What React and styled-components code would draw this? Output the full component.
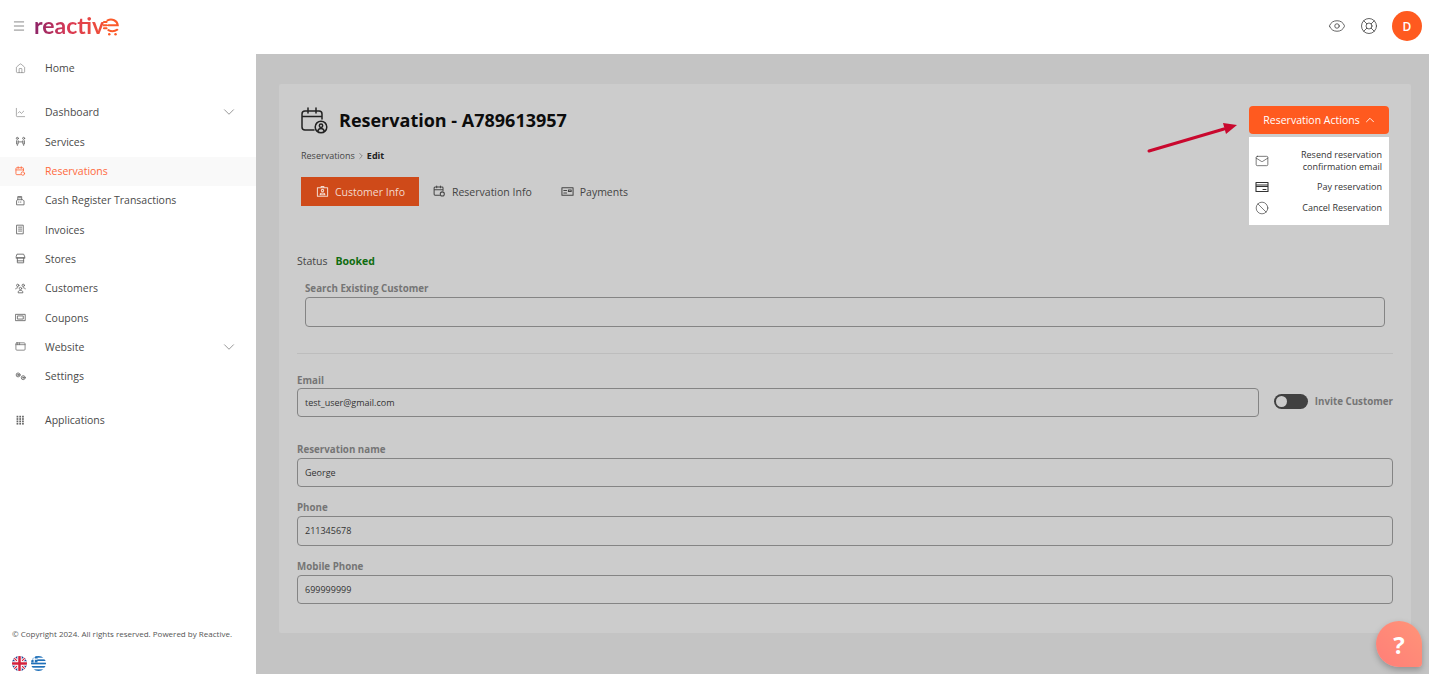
import React from 'react'
import styled, { createGlobalStyle } from 'styled-components'
import { Menu, Eye, LifeBuoy, House, ChartLine, ChevronDown, ChevronUp, ChevronRight, Mail, Ban, AppWindow } from 'lucide-react'

const GlobalStyle = createGlobalStyle`
  html, body { margin: 0; padding: 0; height: 100%; overflow: hidden; }
  body { font-family: "Open Sans", "Liberation Sans", sans-serif; background: #fff; color: #333; }
  * { box-sizing: border-box; }
`

const Page = styled.div`
  width: 1429px;
  height: 674px;
  display: grid;
  grid-template-columns: 256px 1fr;
  grid-template-rows: 54px 1fr;
  position: relative;
  overflow: hidden;
`

const TopBar = styled.header`
  grid-column: 1 / 3;
  display: flex;
  align-items: center;
  justify-content: space-between;
  padding: 0 7px 2px 12px;
  background: #fff;
`

const Brand = styled.div`
  display: flex;
  align-items: center;
  gap: 8px;
  color: #666;
`

const Logo = styled.span`
  display: inline-flex;
  align-items: center;
  font-family: "Lato", sans-serif;
  font-size: 23px;
  font-weight: 700;
  line-height: 24px;
  position: relative;
  top: -1px;
  background: linear-gradient(90deg, #8c2468 0%, #d93a55 40%, #fb5a2a 100%);
  -webkit-background-clip: text;
  background-clip: text;
  color: transparent;
`

const TopActions = styled.div`
  display: flex;
  align-items: center;
  gap: 14px;
  color: #444;
`

const Avatar = styled.div`
  width: 30px;
  height: 30px;
  border-radius: 50%;
  background: #ff5a1f;
  color: #fff;
  font-size: 12px;
  font-weight: 600;
  display: flex;
  align-items: center;
  justify-content: center;
`

const Sidebar = styled.aside`
  display: flex;
  flex-direction: column;
  background: #fff;
`

const NavGroup = styled.nav`
  display: flex;
  flex-direction: column;
  margin-top: ${p => p.$gap || 0}px;
`

const NavRow = styled.div`
  height: 29.3px;
  display: grid;
  grid-template-columns: 30px 1fr 34px;
  align-items: center;
  padding: 0 0 1px 15px;
  font-size: 10.500px;
  color: ${p => (p.$active ? '#ff6a3d' : '#4a4a4a')};
  background: ${p => (p.$active ? '#f9f9f9' : 'transparent')};
  svg { display: block; }
  > svg:first-child {
    width: 11px;
    height: 11px;
    color: ${p => (p.$active ? '#ff6a3d' : '#666')};
  }
`

const NavChevron = styled(ChevronDown)`
  margin-left: -2px;
  color: #666;
`

const FooterBlock = styled.div`
  margin-top: auto;
  padding: 0 0 3px 12px;
`

const Copyright = styled.div`
  font-size: 8px;
  line-height: 11px;
  color: #555;
`

const Flags = styled.div`
  display: flex;
  gap: 4px;
  margin-top: 17px;
`

const Main = styled.main`
  background: #c4c4c4;
  padding: 30px 18px 0 23px;
`

const Card = styled.section`
  height: 549px;
  background: #cccccc;
  padding: 22px 18px 0;
  border-radius: 2px;
`

const HeadRow = styled.div`
  display: flex;
  justify-content: space-between;
  align-items: flex-start;
  padding: 0 4px;
`

const TitleRow = styled.div`
  display: flex;
  align-items: center;
  gap: 11px;
  color: #222;
`

const Title = styled.h1`
  margin: 0;
  font-size: 18px;
  line-height: 28px;
  font-weight: 700;
  color: #0c0c0c;
`

const Crumbs = styled.div`
  display: flex;
  align-items: center;
  gap: 1px;
  font-size: 9px;
  line-height: 12px;
  color: #444;
  margin-top: 16px;
  b { color: #222; }
`

const ActionsWrap = styled.div`
  position: relative;
`

const ActionButton = styled.button`
  width: 140px;
  height: 28px;
  border: 0;
  border-radius: 4px;
  background: #ff5a1f;
  color: #fff;
  font-family: inherit;
  font-size: 10.500px;
  padding: 0 0 0 2px;
  display: flex;
  align-items: center;
  justify-content: center;
  gap: 3px;
`

const ActionMenu = styled.div`
  position: absolute;
  top: 31px;
  left: 0;
  width: 140px;
  height: 88px;
  background: #fff;
  padding: 12px 7px 0 6px;
  display: flex;
  flex-direction: column;
  gap: 7px;
`

const ActionItem = styled.div`
  display: flex;
  align-items: center;
  justify-content: space-between;
  font-size: 9px;
  line-height: 12px;
  color: #333;
  text-align: right;
`

const Tabs = styled.div`
  display: flex;
  align-items: stretch;
  margin: 15px 0 0 4px;
`

const Tab = styled.div`
  height: 29px;
  display: flex;
  align-items: center;
  gap: 6px;
  padding: 0 14px 0 ${p => (p.$active ? 15 : 14)}px;
  margin-right: ${p => (p.$active ? 0 : 1)}px;
  font-size: 10.500px;
  background: ${p => (p.$active ? '#cf4a19' : 'transparent')};
  color: ${p => (p.$active ? '#f3d9cd' : '#444')};
`

const StatusRow = styled.div`
  display: flex;
  gap: 8px;
  font-size: 10.500px;
  line-height: 15px;
  margin-top: 48px;
  color: #444;
  b { color: #106c10; }
`

const Field = styled.div`
  display: flex;
  flex-direction: column;
  flex: 1;
  margin: ${p => p.$top || 0}px ${p => p.$side || 0}px 0;
`

const Label = styled.label`
  font-size: 9.750px;
  line-height: 13px;
  font-weight: 700;
  color: #757575;
  margin-bottom: ${p => p.$gap ?? 2}px;
`

const Input = styled.div`
  height: 29.500px;
  border: 1px solid #848484;
  border-radius: 4px;
  padding: 0 7px;
  display: flex;
  align-items: center;
  font-size: 9px;
  color: #333;
`

const Divider = styled.hr`
  border: 0;
  border-top: 1px solid #bdbdbd;
  margin: 26px 0 0;
`

const InlineRow = styled.div`
  display: flex;
  align-items: flex-end;
`

const Invite = styled.div`
  display: flex;
  align-items: center;
  gap: 7px;
  margin: 0 0 8px 15px;
  font-size: 9.750px;
  font-weight: 700;
  color: #757575;
`

const Toggle = styled.span`
  width: 34px;
  height: 15px;
  border-radius: 8px;
  background: #414141;
  display: block;
  position: relative;
  &::after {
    content: '';
    position: absolute;
    left: 2px;
    top: 2px;
    width: 11px;
    height: 11px;
    border-radius: 50%;
    background: #ccc;
  }
`

const HelpButton = styled.div`
  position: absolute;
  left: 1376px;
  top: 621px;
  width: 46px;
  height: 46px;
  border-radius: 50% 50% 4px 50%;
  background: linear-gradient(45deg, #ff7e78, #ff9478);
  box-shadow: 0 3px 6px rgba(0, 0, 0, 0.25);
  color: #fff;
  font-size: 24px;
  font-weight: 700;
  display: flex;
  align-items: center;
  justify-content: center;
`

const Arrow = styled.svg`
  position: absolute;
  left: 1146px;
  top: 120px;
`

const Glyph = ({ children, size = 13, sw = 1.100 }) => (
  <svg width={size} height={size} viewBox="0 0 14 14" fill="none" stroke="currentColor" strokeWidth={sw} strokeLinecap="round" strokeLinejoin="round">
    {children}
  </svg>
)

const ServicesIcon = () => <Glyph><circle cx="3" cy="3" r="1.300" /><circle cx="11" cy="3" r="1.300" /><path d="M2 6v4M4 6v4M10 6v4M12 6v4M4 7.500h6M3 10v2M11 10v2" /></Glyph>
const CalendarIcon = () => <Glyph><path d="M7 11H2.200a1 1 0 0 1-1-1V3.200a1 1 0 0 1 1-1h7.600a1 1 0 0 1 1 1V6M1.200 5h9.600M4 1v2M8 1v2" /><circle cx="10" cy="9.600" r="2.200" /></Glyph>
const RegisterIcon = () => <Glyph><path d="M3.500 6V2h5v4M2 12V7.500L3 6h7l1.500 1.500V12zM4.500 9h.5M7 9h.5M4.500 3.500h3" /></Glyph>
const InvoiceIcon = () => <Glyph><path d="M2.500 1.500h8v11h-8zM4.500 4h4M4.500 6.500h4M4.500 9h4" /></Glyph>
const StoreIcon = () => <Glyph><path d="M3 1.500h8l1.500 3.500v1h-11V5zM1.500 6.500h11M3 6.500v6h8v-6M3 10h8" /></Glyph>
const PeopleIcon = () => <Glyph><circle cx="3.500" cy="3" r="1.500" /><circle cx="10.500" cy="3" r="1.500" /><circle cx="7" cy="7" r="1.500" /><path d="M1 7.500c0-1 1-1.500 2.500-1.500M13 7.500c0-1-1-1.500-2.500-1.500M4 12c0-2 1-2.500 3-2.500s3 .5 3 2.500z" /></Glyph>
const CouponIcon = () => <Glyph><path d="M1 3h12v8H1zM3.500 5h7v4h-7z" /></Glyph>
const GearsIcon = () => <Glyph><circle cx="4" cy="5" r="2.500" /><circle cx="4" cy="5" r=".8" /><circle cx="10.500" cy="8.500" r="2.500" /><circle cx="10.500" cy="8.500" r=".8" /></Glyph>
const AppsIcon = () => (
  <svg width="14" height="14" viewBox="0 0 14 14" fill="currentColor">
    {[1, 4, 7, 10].map(y => [2, 5.500, 9].map(x => <rect key={`${x}-${y}`} x={x} y={y} width="2.200" height="2.200" />))}
  </svg>
)
const CardIcon = () => <Glyph size={14}><path d="M1 2.500h12v9H1zM1 5h12M1 6.500h12M8 9.500h3" /></Glyph>
const BadgeIcon = () => <Glyph><path d="M1.500 3h11v9h-11zM5.500 3V1.500h3V3" /><circle cx="7" cy="6" r="1.300" /><path d="M4.500 10.500c0-1.500 1-2 2.500-2s2.500 .5 2.500 2z" /></Glyph>
const TicketIcon = () => <Glyph><path d="M1 3h12v8H1zM3 6h3M3 8.500h3M8 5.500h3v1.500H8z" /></Glyph>
const BigCalendar = () => (
  <svg width="27" height="27" viewBox="0 0 27 27" fill="none" stroke="currentColor" strokeWidth="1.500" strokeLinecap="round" strokeLinejoin="round">
    <path d="M13 23H4a3 3 0 0 1-3-3V7a3 3 0 0 1 3-3h14a3 3 0 0 1 3 3v5M1 9.500h20M7 1v5M15 1v5" />
    <circle cx="20" cy="20" r="5.800" />
    <circle cx="20" cy="18.800" r="1.700" />
    <path d="M16.800 24c.5-1.800 1.500-2.500 3.200-2.500s2.700.7 3.200 2.500" />
  </svg>
)

const UkFlag = () => (
  <svg width="15" height="15" viewBox="0 0 15 15">
    <defs><clipPath id="ukc"><circle cx="7.500" cy="7.500" r="7.500" /></clipPath></defs>
    <g clipPath="url(#ukc)">
      <rect width="15" height="15" fill="#1f3f8f" />
      <path d="M0 0l15 15M15 0L0 15" stroke="#fff" strokeWidth="3" />
      <path d="M0 0l15 15M15 0L0 15" stroke="#d4213d" strokeWidth="1.200" />
      <path d="M7.500 0v15M0 7.500h15" stroke="#fff" strokeWidth="4.500" />
      <path d="M7.500 0v15M0 7.500h15" stroke="#d4213d" strokeWidth="2.500" />
    </g>
  </svg>
)

const GrFlag = () => (
  <svg width="15" height="15" viewBox="0 0 15 15">
    <defs><clipPath id="grc"><circle cx="7.500" cy="7.500" r="7.500" /></clipPath></defs>
    <g clipPath="url(#grc)">
      <rect width="15" height="15" fill="#fff" />
      {[0, 3.340, 6.680, 10.020, 13.360].map(y => <rect key={y} y={y} width="15" height="1.670" fill="#1f6fb8" />)}
      <rect width="6.500" height="6.500" fill="#1f6fb8" />
      <path d="M3.200 0v6.500M0 3.200h6.500" stroke="#fff" strokeWidth="1.200" />
    </g>
  </svg>
)

const CartE = () => (
  <svg width="17" height="20" viewBox="0 0 19 22" fill="none" stroke="#fb5a2a" strokeWidth="2.200" strokeLinecap="round" style={{ marginLeft: -1, marginTop: 3 }}>
    <path d="M1 5.500h3M0 9h4M1 12.500h3M5 3.500c5-2 11 0 11.500 5.500H6M16 14c-3 2-7 2-10 .5" />
    <circle cx="7" cy="19" r="1.400" fill="#fb5a2a" stroke="none" />
    <circle cx="14" cy="19" r="1.400" fill="#fb5a2a" stroke="none" />
  </svg>
)

const topNav = [
  { label: 'Dashboard', icon: <ChartLine size={14} strokeWidth={1.200} />, more: true },
  { label: 'Services', icon: <ServicesIcon /> },
  { label: 'Reservations', icon: <CalendarIcon />, active: true },
  { label: 'Cash Register Transactions', icon: <RegisterIcon /> },
  { label: 'Invoices', icon: <InvoiceIcon /> },
  { label: 'Stores', icon: <StoreIcon /> },
  { label: 'Customers', icon: <PeopleIcon /> },
  { label: 'Coupons', icon: <CouponIcon /> },
  { label: 'Website', icon: <AppWindow size={14} strokeWidth={1.600} />, more: true },
  { label: 'Settings', icon: <GearsIcon /> },
]

const NavItem = ({ item }) => (
  <NavRow $active={item.active}>
    {item.icon}
    <span>{item.label}</span>
    {item.more && <NavChevron size={18} strokeWidth={0.9} />}
  </NavRow>
)

export default function App() {
  return (
    <Page>
      <GlobalStyle />
      <TopBar>
        <Brand>
          <Menu size={14} strokeWidth={1.300} />
          <Logo>reactiv<CartE /></Logo>
        </Brand>
        <TopActions>
          <Eye size={18} strokeWidth={1.100} />
          <LifeBuoy size={18} strokeWidth={1.100} />
          <Avatar>D</Avatar>
        </TopActions>
      </TopBar>

      <Sidebar>
        <NavGroup>
          <NavItem item={{ label: 'Home', icon: <House size={14} strokeWidth={1.200} /> }} />
        </NavGroup>
        <NavGroup $gap={15}>
          {topNav.map(item => <NavItem key={item.label} item={item} />)}
        </NavGroup>
        <NavGroup $gap={15}>
          <NavItem item={{ label: 'Applications', icon: <AppsIcon /> }} />
        </NavGroup>
        <FooterBlock>
          <Copyright>© Copyright 2024. All rights reserved. Powered by Reactive.</Copyright>
          <Flags><UkFlag /><GrFlag /></Flags>
        </FooterBlock>
      </Sidebar>

      <Main>
        <Card>
          <HeadRow>
            <div>
              <TitleRow>
                <BigCalendar />
                <Title>Reservation - A789613957</Title>
              </TitleRow>
              <Crumbs>Reservations <ChevronRight size={10} strokeWidth={1.200} /> <b>Edit</b></Crumbs>
            </div>
            <ActionsWrap>
              <ActionButton>Reservation Actions <ChevronUp size={14} strokeWidth={1.500} /></ActionButton>
              <ActionMenu>
                <ActionItem><Mail size={14} strokeWidth={1.100} /><span>Resend reservation<br />confirmation email</span></ActionItem>
                <ActionItem><CardIcon /><span>Pay reservation</span></ActionItem>
                <ActionItem><Ban size={14} strokeWidth={1.100} /><span>Cancel Reservation</span></ActionItem>
              </ActionMenu>
            </ActionsWrap>
          </HeadRow>

          <Tabs>
            <Tab $active><BadgeIcon />Customer Info</Tab>
            <Tab><CalendarIcon />Reservation Info</Tab>
            <Tab><TicketIcon />Payments</Tab>
          </Tabs>

          <StatusRow>Status <b>Booked</b></StatusRow>

          <Field $top={13} $side={8}>
            <Label>Search Existing Customer</Label>
            <Input />
          </Field>

          <Divider />

          <InlineRow>
            <Field $top={20}>
              <Label $gap={1}>Email</Label>
              <Input>test_user@gmail.com</Input>
            </Field>
            <Invite><Toggle />Invite Customer</Invite>
          </InlineRow>

          <Field $top={25.500}>
            <Label>Reservation name</Label>
            <Input>George</Input>
          </Field>
          <Field $top={14}>
            <Label>Phone</Label>
            <Input>211345678</Input>
          </Field>
          <Field $top={14}>
            <Label>Mobile Phone</Label>
            <Input>699999999</Input>
          </Field>
        </Card>
      </Main>

      <Arrow width="96" height="36" viewBox="0 0 96 36">
        <path d="M3 31L78 9" stroke="#c9082e" strokeWidth="3" strokeLinecap="round" />
        <path d="M91 5L77 3L80 14z" fill="#c9082e" />
      </Arrow>
      <HelpButton>?</HelpButton>
    </Page>
  )
}
